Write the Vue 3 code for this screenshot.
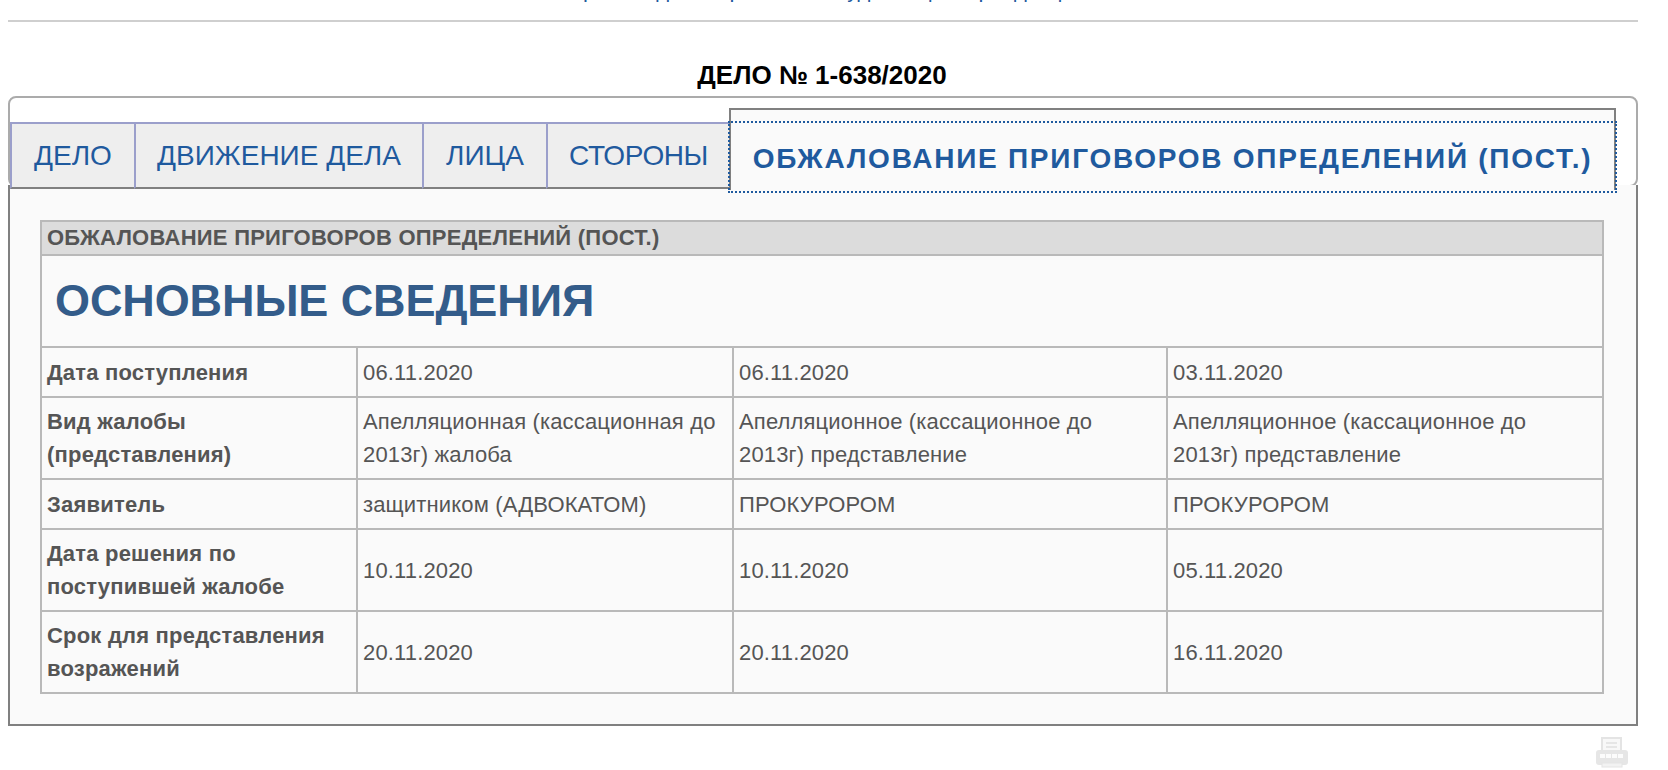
<template>
  <div class="page">
    <div class="top-link">Карточка дела в районном суде общей юрисдикции</div>
    <div class="top-rule"></div>
    <div class="case-title">ДЕЛО № 1-638/2020</div>

    <div class="tabs-head">
      <div class="tabs">
        <div class="tab" v-for="t in tabs" :key="t">{{ t }}</div>
        <div class="tab active">ОБЖАЛОВАНИЕ ПРИГОВОРОВ ОПРЕДЕЛЕНИЙ (ПОСТ.)</div>
      </div>
    </div>
    <div class="panel">
      <table class="info">
        <colgroup>
          <col class="col-label" />
          <col class="col-a" />
          <col class="col-b" />
          <col />
        </colgroup>
        <tbody>
          <tr><td class="caption" colspan="4">ОБЖАЛОВАНИЕ ПРИГОВОРОВ ОПРЕДЕЛЕНИЙ (ПОСТ.)</td></tr>
          <tr><td class="heading" colspan="4">ОСНОВНЫЕ СВЕДЕНИЯ</td></tr>
          <tr v-for="r in rows" :key="r.label" class="row">
            <td class="label">{{ r.label }}</td>
            <td v-for="(v, i) in r.values" :key="i">{{ v }}</td>
          </tr>
        </tbody>
      </table>
    </div>

    <div class="print-row">
      <svg width="32" height="31" viewBox="0 0 32 31">
        <rect x="6" y="1" width="19" height="15" fill="#f8f8f8" stroke="#e4e4e4" stroke-width="2" />
        <path d="M10 6h11M10 10h11" stroke="#e0e0e0" stroke-width="1.5" />
        <rect x="0" y="13" width="32" height="15" rx="3" fill="#e6e6e6" />
        <path d="M4 19h24" stroke="#fcfcfc" stroke-width="4" stroke-dasharray="5 1" />
        <rect x="6" y="26" width="20" height="4" fill="#f2f2f2" stroke="#e4e4e4" />
      </svg>
    </div>
  </div>
</template>

<script setup>
const tabs = ["ДЕЛО", "ДВИЖЕНИЕ ДЕЛА", "ЛИЦА", "СТОРОНЫ"];

const rows = [
  {
    label: "Дата поступления",
    values: ["06.11.2020", "06.11.2020", "03.11.2020"],
  },
  {
    label: "Вид жалобы\n(представления)",
    values: [
      "Апелляционная (кассационная до\n2013г) жалоба",
      "Апелляционное (кассационное до\n2013г) представление",
      "Апелляционное (кассационное до\n2013г) представление",
    ],
  },
  {
    label: "Заявитель",
    values: ["защитником (АДВОКАТОМ)", "ПРОКУРОРОМ", "ПРОКУРОРОМ"],
  },
  {
    label: "Дата решения по\nпоступившей жалобе",
    values: ["10.11.2020", "10.11.2020", "05.11.2020"],
  },
  {
    label: "Срок для представления\nвозражений",
    values: ["20.11.2020", "20.11.2020", "16.11.2020"],
  },
];
</script>

<style>
html,
body {
  margin: 0;
  background: #fff;
  overflow: hidden;
}
</style>

<style scoped>
.page {
  width: 1668px;
  height: 770px;
  overflow: hidden;
  font-family: "Liberation Sans", Arial, sans-serif;
}

/* only the descenders of this line are still in view */
.top-link {
  width: 1644px;
  height: 20px;
  margin-top: -20px;
  padding-bottom: 20px;
  text-align: center;
  font-size: 22px;
  line-height: 20px;
  color: #1f5a9e;
}

.top-rule {
  width: 1630px;
  height: 2px;
  margin-left: 8px;
  background: #cfcfcf;
}

.case-title {
  width: 1644px;
  margin-top: 39px;
  height: 35px;
  text-align: center;
  font-size: 26px;
  line-height: 28px;
  font-weight: bold;
  color: #000;
}

.tabs-head {
  width: 1630px;
  height: 91px;
  margin-left: 8px;
  box-sizing: border-box;
  border: 2px solid #ababab;
  border-radius: 8px;
  padding-top: 24px;
}

.tabs {
  position: relative;
  z-index: 1;
  display: flex;
  height: 67px;
  font-size: 28px;
  color: #1f5a9e;
}

.tab {
  display: flex;
  align-items: center;
  justify-content: center;
  box-sizing: border-box;
  background: #eee;
  border-top: 2px solid #9b9fcb;
  border-left: 2px solid #9b9fcb;
  border-bottom: 2px solid #808080;
}

.tab:nth-child(1) {
  width: 124px;
}

.tab:nth-child(2) {
  width: 288px;
}

.tab:nth-child(3) {
  width: 124px;
}

.tab:nth-child(4) {
  width: 183px;
  letter-spacing: -0.4px;
}

.tab.active {
  position: relative;
  width: 887px;
  height: 82px;
  margin-top: -14px;
  padding-top: 17px;
  background: #fafafa;
  border: 2px solid #808080;
  border-bottom: 0;
  font-weight: bold;
  letter-spacing: 1.75px;
}

.tab.active::after {
  content: "";
  position: absolute;
  left: -3px;
  right: -3px;
  top: 11px;
  bottom: -3px;
  border: 2px dotted #1f5a9e;
}

.panel {
  width: 1630px;
  margin: -2px 0 0 8px;
  box-sizing: border-box;
  padding: 35px 32px 30px 30px;
  background: #fafafa;
  border: 2px solid #808080;
  border-top: 0;
}

.info {
  width: 100%;
  border-collapse: collapse;
  table-layout: fixed;
  font-size: 22px;
  line-height: 33px;
  letter-spacing: 0.15px;
  color: #555;
}

.col-label {
  width: 316px;
}

.col-a {
  width: 376px;
}

.col-b {
  width: 434px;
}

.info td {
  border: 2px solid #b9b9b9;
  padding: 7px 5px;
  vertical-align: middle;
  white-space: pre-line;
}

.row {
  height: 50px;
}

.info td.caption {
  background: #dcdcdc;
  font-weight: bold;
  letter-spacing: 0.25px;
  padding: 0 5px;
  line-height: 32px;
}

.info td.heading {
  height: 88px;
  padding: 0 13px 2px;
  font-size: 45px;
  letter-spacing: -0.1px;
  font-weight: bold;
  color: #335c8a;
}

.info td.label {
  font-weight: bold;
  letter-spacing: 0.2px;
}

.print-row {
  display: flex;
  justify-content: flex-end;
  padding: 11px 40px 0 0;
}
</style>
